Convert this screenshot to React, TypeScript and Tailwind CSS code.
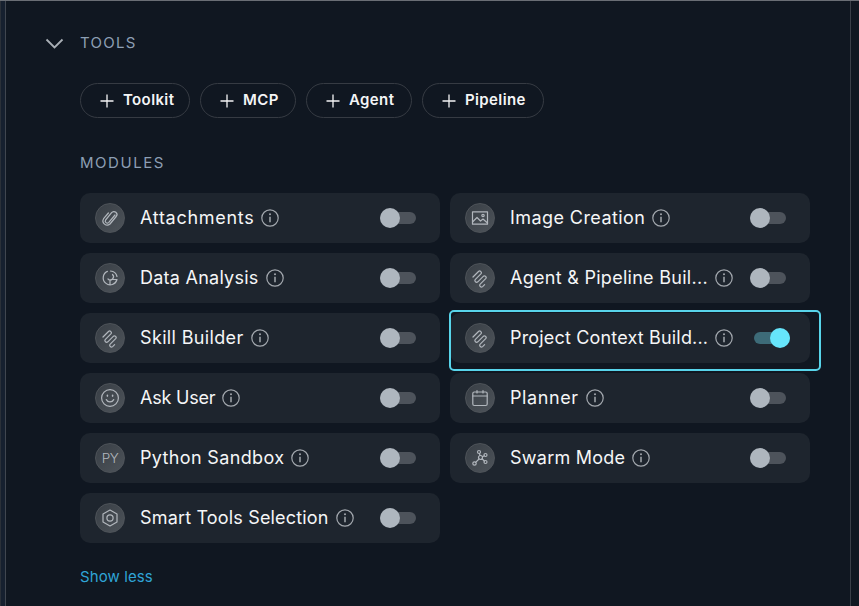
import React from "react";

const FONT = "font-['Inter',sans-serif]";

function Info() {
  return (
    <svg width="18" height="18" viewBox="0 0 18 18" fill="none" stroke="#a3a8ae" strokeWidth="1.2" className="shrink-0">
      <circle cx="9" cy="9" r="8.2" />
      <path d="M9 7.8v5.4" strokeWidth="1.5" />
      <circle cx="9" cy="5.2" r="1" fill="#a3a8ae" stroke="none" />
    </svg>
  );
}

const S = { width: 20, height: 20, viewBox: "0 0 20 20", fill: "none", stroke: "#b2b7bd", strokeWidth: 1.2, strokeLinecap: "round" as const, strokeLinejoin: "round" as const };

function Clip() {
  return <svg {...S}><path d="M15 7L8.6 14.6a2 2 0 0 1-3-2.6L11.6 4.6a3 3 0 0 1 4.6 3.9L10 16a4.2 4.2 0 0 1-6.4-5.3L8.4 5" /></svg>;
}
function Analysis() {
  return <svg {...S}><path d="M7.4 3.4A7 7 0 1 0 17 11.5L11 11.5" /><path d="M10.5 3a7 7 0 0 1 6.5 5.5" /><path d="M12.5 6.5A3 3 0 1 1 8 11M10 12v4.5" /></svg>;
}
function Skill() {
  return (
    <svg {...S}>
      <path d="M3 9L8.5 3.5a1.7 1.7 0 0 1 2.4 2.4L5.4 11.4a1.7 1.7 0 0 0 2.4 2.4L13.3 8.3a1.7 1.7 0 0 1 2.4 2.4L10.2 16.2a1.7 1.7 0 0 0 2.4 2.4L14.6 16.6" />
    </svg>
  );
}
function Smile() {
  return <svg {...S}><circle cx="10" cy="10" r="8.4" /><path d="M6.3 11.6a4.2 4.2 0 0 0 7.4 0" /><path d="M7.4 7.4v.7M12.6 7.4v.7" strokeWidth="1.6" /></svg>;
}
function Hex() {
  return <svg {...S}><path d="M10 2l7 4v8l-7 4-7-4V6z" /><circle cx="10" cy="10" r="3.1" /></svg>;
}
function Img() {
  return <svg {...S}><rect x="2.5" y="3.8" width="15" height="12.4" /><path d="M2.5 14l4.5-4.5 3.5 3.5 2.5-2 4.5 4" /><circle cx="13" cy="7.5" r="1.2" /></svg>;
}
function Cal() {
  return <svg {...S}><rect x="2.8" y="4" width="14.4" height="13.5" rx="1.5" /><path d="M2.8 8h14.4M7 2.5V5M13 2.5V5" /></svg>;
}
function Swarm() {
  return <svg {...S}><circle cx="10.5" cy="9.5" r="2" /><circle cx="9" cy="4" r="1.5" /><circle cx="15.5" cy="7" r="1.5" /><circle cx="15.5" cy="14" r="1.5" /><circle cx="4.5" cy="15.5" r="1.7" /><path d="M10 7.5L9.4 5.5M12.4 8.7l1.8-1M12.2 11l2.2 2M9 11l-3.3 3.3" /></svg>;
}
function Py() {
  return <span className="text-[13.5px] font-light tracking-[-0.6px] text-[#b2b7bd]">PY</span>;
}

type M = { name: string; icon: React.ReactNode; track: string; on?: boolean };

const left: M[] = [
  { name: "Attachments", icon: <Clip />, track: "tracking-[0.7px]" },
  { name: "Data Analysis", icon: <Analysis />, track: "tracking-[0.25px]" },
  { name: "Skill Builder", icon: <Skill />, track: "tracking-[0.35px]" },
  { name: "Ask User", icon: <Smile />, track: "tracking-[-0.2px]" },
  { name: "Python Sandbox", icon: <Py />, track: "tracking-[0.35px]" },
  { name: "Smart Tools Selection", icon: <Hex />, track: "tracking-[0.17px]" },
];
const right: M[] = [
  { name: "Image Creation", icon: <Img />, track: "tracking-[0.42px]" },
  { name: "Agent & Pipeline Buil...", icon: <Skill />, track: "tracking-[0.28px]" },
  { name: "Project Context Build...", icon: <Skill />, on: true, track: "tracking-[0.17px]" },
  { name: "Planner", icon: <Cal />, track: "tracking-[0.6px]" },
  { name: "Swarm Mode", icon: <Swarm />, track: "tracking-[0.25px]" },
];

function Row({ m }: { m: M }) {
  return (
    <div className={`relative flex h-[50px] w-[360px] items-center rounded-[10px] bg-[#1e252e] pl-[15px] ${m.on ? "pr-5" : "pr-6"}`}>
      <div className="flex h-[30px] w-[30px] shrink-0 items-center justify-center rounded-full border border-[#4e5359] bg-gradient-to-br from-[#383e45] to-[#4e545a]">
        {m.icon}
      </div>
      <div className="ml-[15px] flex min-w-0 flex-1 items-center gap-[7px]">
        <span className={`whitespace-nowrap text-[18px] leading-6 text-[#f5f6f7] ${m.track}`}>{m.name}</span>
        <Info />
      </div>
      {m.on ? (
        <div className="relative h-3 w-9 shrink-0 rounded-full bg-[#3d6b78]">
          <div className="absolute right-0 -top-1 h-5 w-5 rounded-full bg-[#66e5fb]" />
        </div>
      ) : (
        <div className="relative h-3 w-9 shrink-0 rounded-full bg-[#4d535b]">
          <div className="absolute left-0 -top-1 h-5 w-5 rounded-full bg-[#aeb6be]" />
        </div>
      )}
      {m.on && <div className="pointer-events-none absolute -left-[1px] -top-[3px] h-[61px] w-[372px] rounded-[5px] border-2 border-[#58d4ea]" />}
    </div>
  );
}

function Pill({ label, w }: { label: string; w: string }) {
  return (
    <button className={`flex h-[35px] items-center gap-[9px] rounded-full border border-[#363b43] pl-[19px] text-[15px] font-semibold tracking-[0.38px] text-[#f4f5f6] ${w}`}>
      <svg width="14" height="14" viewBox="0 0 14 14" stroke="#f4f5f6" strokeWidth="1.3"><path d="M7 0.5v13M0.5 7h13" /></svg>
      {label}
    </button>
  );
}

export default function App() {
  return (
    <div className={`${FONT} flex h-[606px] w-[859px] overflow-hidden border-t border-t-[#6a6e75] bg-[#101721]`}>
      <div className="h-full w-[6px] shrink-0 border-l border-r border-l-[#2a3038] border-r-[#40464f] bg-[#16202f]" />
      <div className="h-full w-[845px] shrink-0 border-r border-r-[#3a3f48] pl-[39px]">
        <div className="mt-[30px] flex h-6 items-center gap-[16px]">
          <svg width="19" height="11" viewBox="0 0 19 11" fill="none" stroke="#a9afb6" strokeWidth="1.8"><path d="M1.5 1.5L9.5 9.5L17.5 1.5" /></svg>
          <span className="text-[15px] tracking-[1.3px] text-[#8d9fb4]">TOOLS</span>
        </div>
        <div className="ml-[35px] mt-[28px] flex gap-[10px]">
          <Pill label="Toolkit" w="w-[110px]" />
          <Pill label="MCP" w="w-[96px]" />
          <Pill label="Agent" w="w-[106px]" />
          <Pill label="Pipeline" w="w-[122px]" />
        </div>
        <div className="ml-[35px] mt-[35px] text-[15px] leading-5 tracking-[1.55px] text-[#8d9fb4]">MODULES</div>
        <div className="ml-[35px] mt-[20px] flex gap-[10px]">
          <div className="flex flex-col gap-[10px]">{left.map((m) => <Row key={m.name} m={m} />)}</div>
          <div className="flex flex-col gap-[10px]">{right.map((m) => <Row key={m.name} m={m} />)}</div>
        </div>
        <div className="ml-[35px] mt-[24px] text-[15px] leading-5 tracking-[0.1px] text-[#2fa4d6]">Show less</div>
      </div>
    </div>
  );
}
